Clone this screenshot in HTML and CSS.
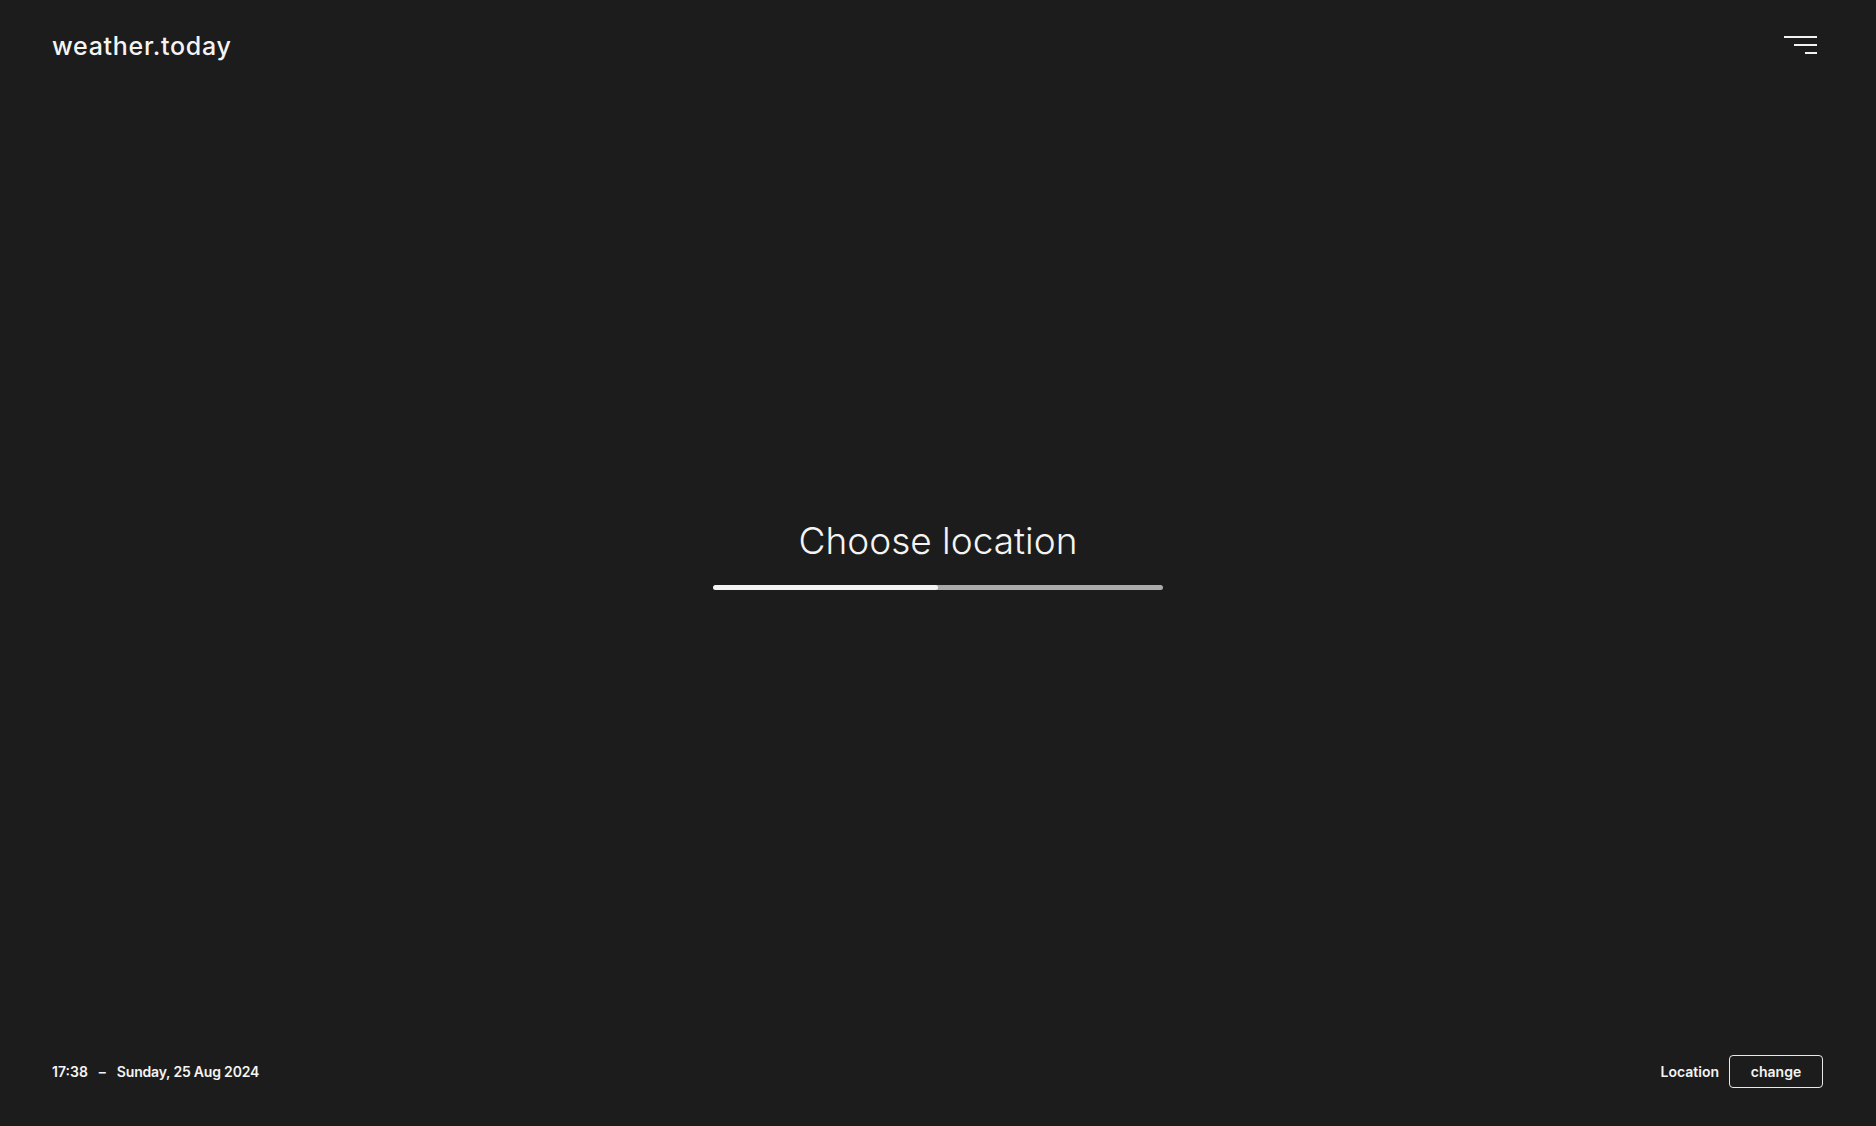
FILE: index.html
```html
<!DOCTYPE html>
<html lang="en">
<head>
<meta charset="utf-8">
<title>weather.today</title>
<link rel="stylesheet" href="styles.css">
</head>
<body>
<div class="page">
  <header class="header">
    <div class="logo">weather.today</div>
    <button class="menu" aria-label="Menu">
      <span class="line l1"></span>
      <span class="line l2"></span>
      <span class="line l3"></span>
    </button>
  </header>
  <main class="main">
    <div class="chooser">
      <h1 class="title">Choose location</h1>
      <div class="progress"><div class="fill" style="width:50%"></div></div>
    </div>
  </main>
  <footer class="footer">
    <div class="datetime"><span>17:38</span><span class="dash">–</span><span class="date">Sunday, 25 Aug 2024</span></div>
    <div class="loc">
      <span class="loc-label">Location</span>
      <button class="change">change</button>
    </div>
  </footer>
</div>
</body>
</html>
```
FILE: styles.css
```css
* { box-sizing: border-box; }
html, body { margin: 0; padding: 0; }
body {
  background: #1c1c1c;
  color: #f4f4f4;
  font-family: Inter, "Noto Sans", "Liberation Sans", sans-serif;
}
.page {
  height: 100vh;
  display: flex;
  flex-direction: column;
}
.header {
  display: flex;
  justify-content: space-between;
  align-items: center;
  padding: 26px 52px 0 52px;
}
.logo {
  font-size: 25px;
  font-weight: 500;
  letter-spacing: 0.7px;
  line-height: 40px;
}
.menu {
  background: none;
  border: 0;
  padding: 0 7px 0 0;
  display: flex;
  flex-direction: column;
  align-items: flex-end;
  gap: 6px;
  cursor: pointer;
  margin-top: -2px;
}
.line { display: block; height: 2px; background: #f2f2f2; }
.l1 { width: 33px; }
.l2 { width: 23px; }
.l3 { width: 12px; }
.main {
  flex: 1;
  display: flex;
  align-items: center;
  justify-content: center;
}
.chooser {
  display: flex;
  flex-direction: column;
  align-items: center;
  margin-top: -12px;
}
.title {
  margin: 0;
  font-size: 37px;
  font-weight: 300;
  line-height: 44px;
  letter-spacing: 0;
  color: #f4f4f4;
}
.progress {
  margin-top: 22px;
  width: 450px;
  height: 5px;
  border-radius: 3px;
  background: #ababab;
  overflow: hidden;
}
.fill { height: 100%; background: #f4f4f4; border-radius: 3px; }
.footer {
  display: flex;
  justify-content: space-between;
  align-items: center;
  padding: 0 53px 38px 52px;
  font-size: 14px;
  font-weight: 600;
}
.datetime { display: flex; gap: 10px; }
.dash { padding: 0 1px; }
.date { letter-spacing: -0.2px; }
.loc { display: flex; align-items: center; gap: 10px; }
.change {
  width: 94px;
  height: 33px;
  background: transparent;
  border: 1px solid #e8e8e8;
  border-radius: 4px;
  color: #f4f4f4;
  font-family: inherit;
  font-size: 14px;
  font-weight: 600;
  cursor: pointer;
}
```
